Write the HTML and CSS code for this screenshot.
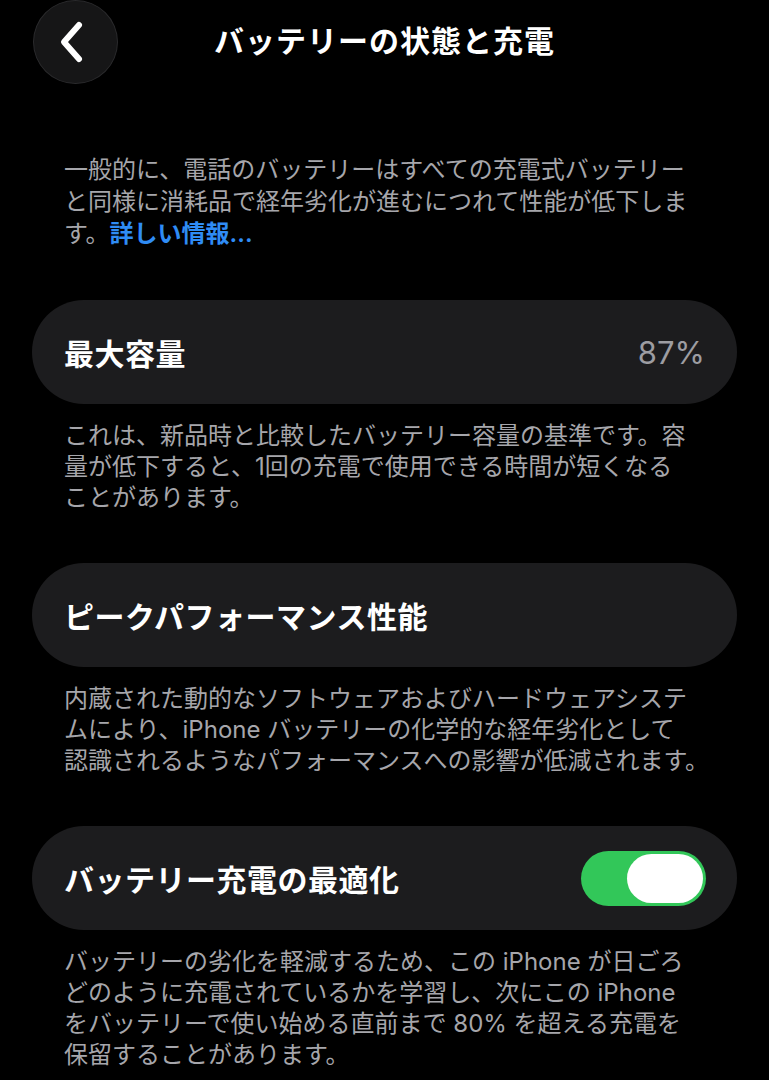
FILE: index.html
```html
<!DOCTYPE html>
<html lang="ja">
<head>
<meta charset="utf-8">
<title>バッテリーの状態と充電</title>
<link rel="stylesheet" href="styles.css">
</head>
<body>
<div class="screen">
  <header class="nav">
    <div class="nav-side">
      <button class="back" aria-label="戻る">
        <svg width="28" height="44" viewBox="0 0 28 44"><path d="M20 5 L5 22 L20 39" fill="none" stroke="#fff" stroke-width="6" stroke-linecap="round" stroke-linejoin="round"/></svg>
      </button>
    </div>
    <h1 class="nav-title">バッテリーの状態と充電</h1>
    <div class="nav-side"></div>
  </header>

  <p class="intro">一般的に、電話のバッテリーはすべての充電式バッテリー<br>と同様に消耗品で経年劣化が進むにつれて性能が低下しま<br>す。<a class="link" href="#">詳しい情報...</a></p>

  <section class="group">
    <div class="card">
      <span class="card-title">最大容量</span>
      <span class="card-value">87%</span>
    </div>
    <p class="note">これは、新品時と比較したバッテリー容量の基準です。容<br>量が低下すると、1回の充電で使用できる時間が短くなる<br>ことがあります。</p>
  </section>

  <section class="group">
    <div class="card">
      <span class="card-title">ピークパフォーマンス性能</span>
    </div>
    <p class="note">内蔵された動的なソフトウェアおよびハードウェアシステ<br>ムにより、iPhone バッテリーの化学的な経年劣化として<br>認識されるようなパフォーマンスへの影響が低減されます。</p>
  </section>

  <section class="group">
    <div class="card">
      <span class="card-title">バッテリー充電の最適化</span>
      <span class="toggle on"><span class="knob"></span></span>
    </div>
    <p class="note">バッテリーの劣化を軽減するため、この iPhone が日ごろ<br>どのように充電されているかを学習し、次にこの iPhone<br>をバッテリーで使い始める直前まで 80% を超える充電を<br>保留することがあります。</p>
  </section>
</div>
</body>
</html>
```

FILE: styles.css
```css
html, body {
  margin: 0;
  padding: 0;
  background: #000;
}
body {
  font-family: "Inter", "Noto Sans CJK JP", sans-serif;
  color: #fff;
  -webkit-font-smoothing: antialiased;
}
.screen {
  width: 769px;
  height: 1080px;
  overflow: hidden;
  display: flex;
  flex-direction: column;
}
.nav {
  display: grid;
  grid-template-columns: 1fr auto 1fr;
  align-items: center;
  height: 80px;
}
.nav-side {
  display: flex;
  align-items: center;
}
.back {
  margin-left: 33px;
  width: 85px;
  height: 84px;
  margin-top: 0;
  border-radius: 50%;
  background: #161617;
  border: 1.5px solid #2a2a2c;
  display: flex;
  align-items: center;
  justify-content: center;
  padding: 0 6px 0 0;
  box-sizing: border-box;
}
.nav-title {
  margin: 0;
  padding-bottom: 6px;
  font-size: 30px;
  font-weight: 700;
  letter-spacing: 1px;
  white-space: nowrap;
}
.intro {
  margin: 74px 0 0;
  padding: 0 64px;
  font-size: 24px;
  line-height: 32px;
  color: #a6a6ab;
  white-space: nowrap;
}
.link {
  color: #2f8cf5;
  text-decoration: none;
  font-weight: 600;
}
.group {
  margin-top: 50px;
  display: flex;
  flex-direction: column;
}
.card {
  margin: 0 32px;
  height: 104px;
  border-radius: 52px;
  background: #1c1c1e;
  display: flex;
  align-items: center;
  justify-content: space-between;
  padding: 0 32px;
}
.card-title {
  font-size: 30px;
  font-weight: 600;
  letter-spacing: 0.5px;
}
.card-value {
  font-size: 31px;
  color: #9d9da2;
}
.note {
  margin: 16px 0 0;
  padding: 0 64px;
  font-size: 24px;
  line-height: 31px;
  color: #a6a6ab;
  white-space: nowrap;
}
.toggle {
  width: 125px;
  height: 55px;
  border-radius: 28px;
  background: #32c759;
  display: flex;
  align-items: center;
  justify-content: flex-end;
  padding: 0 3px;
  box-sizing: border-box;
  margin-right: -1px;
}
.knob {
  width: 76px;
  height: 49px;
  border-radius: 25px;
  background: #fff;
}
```
